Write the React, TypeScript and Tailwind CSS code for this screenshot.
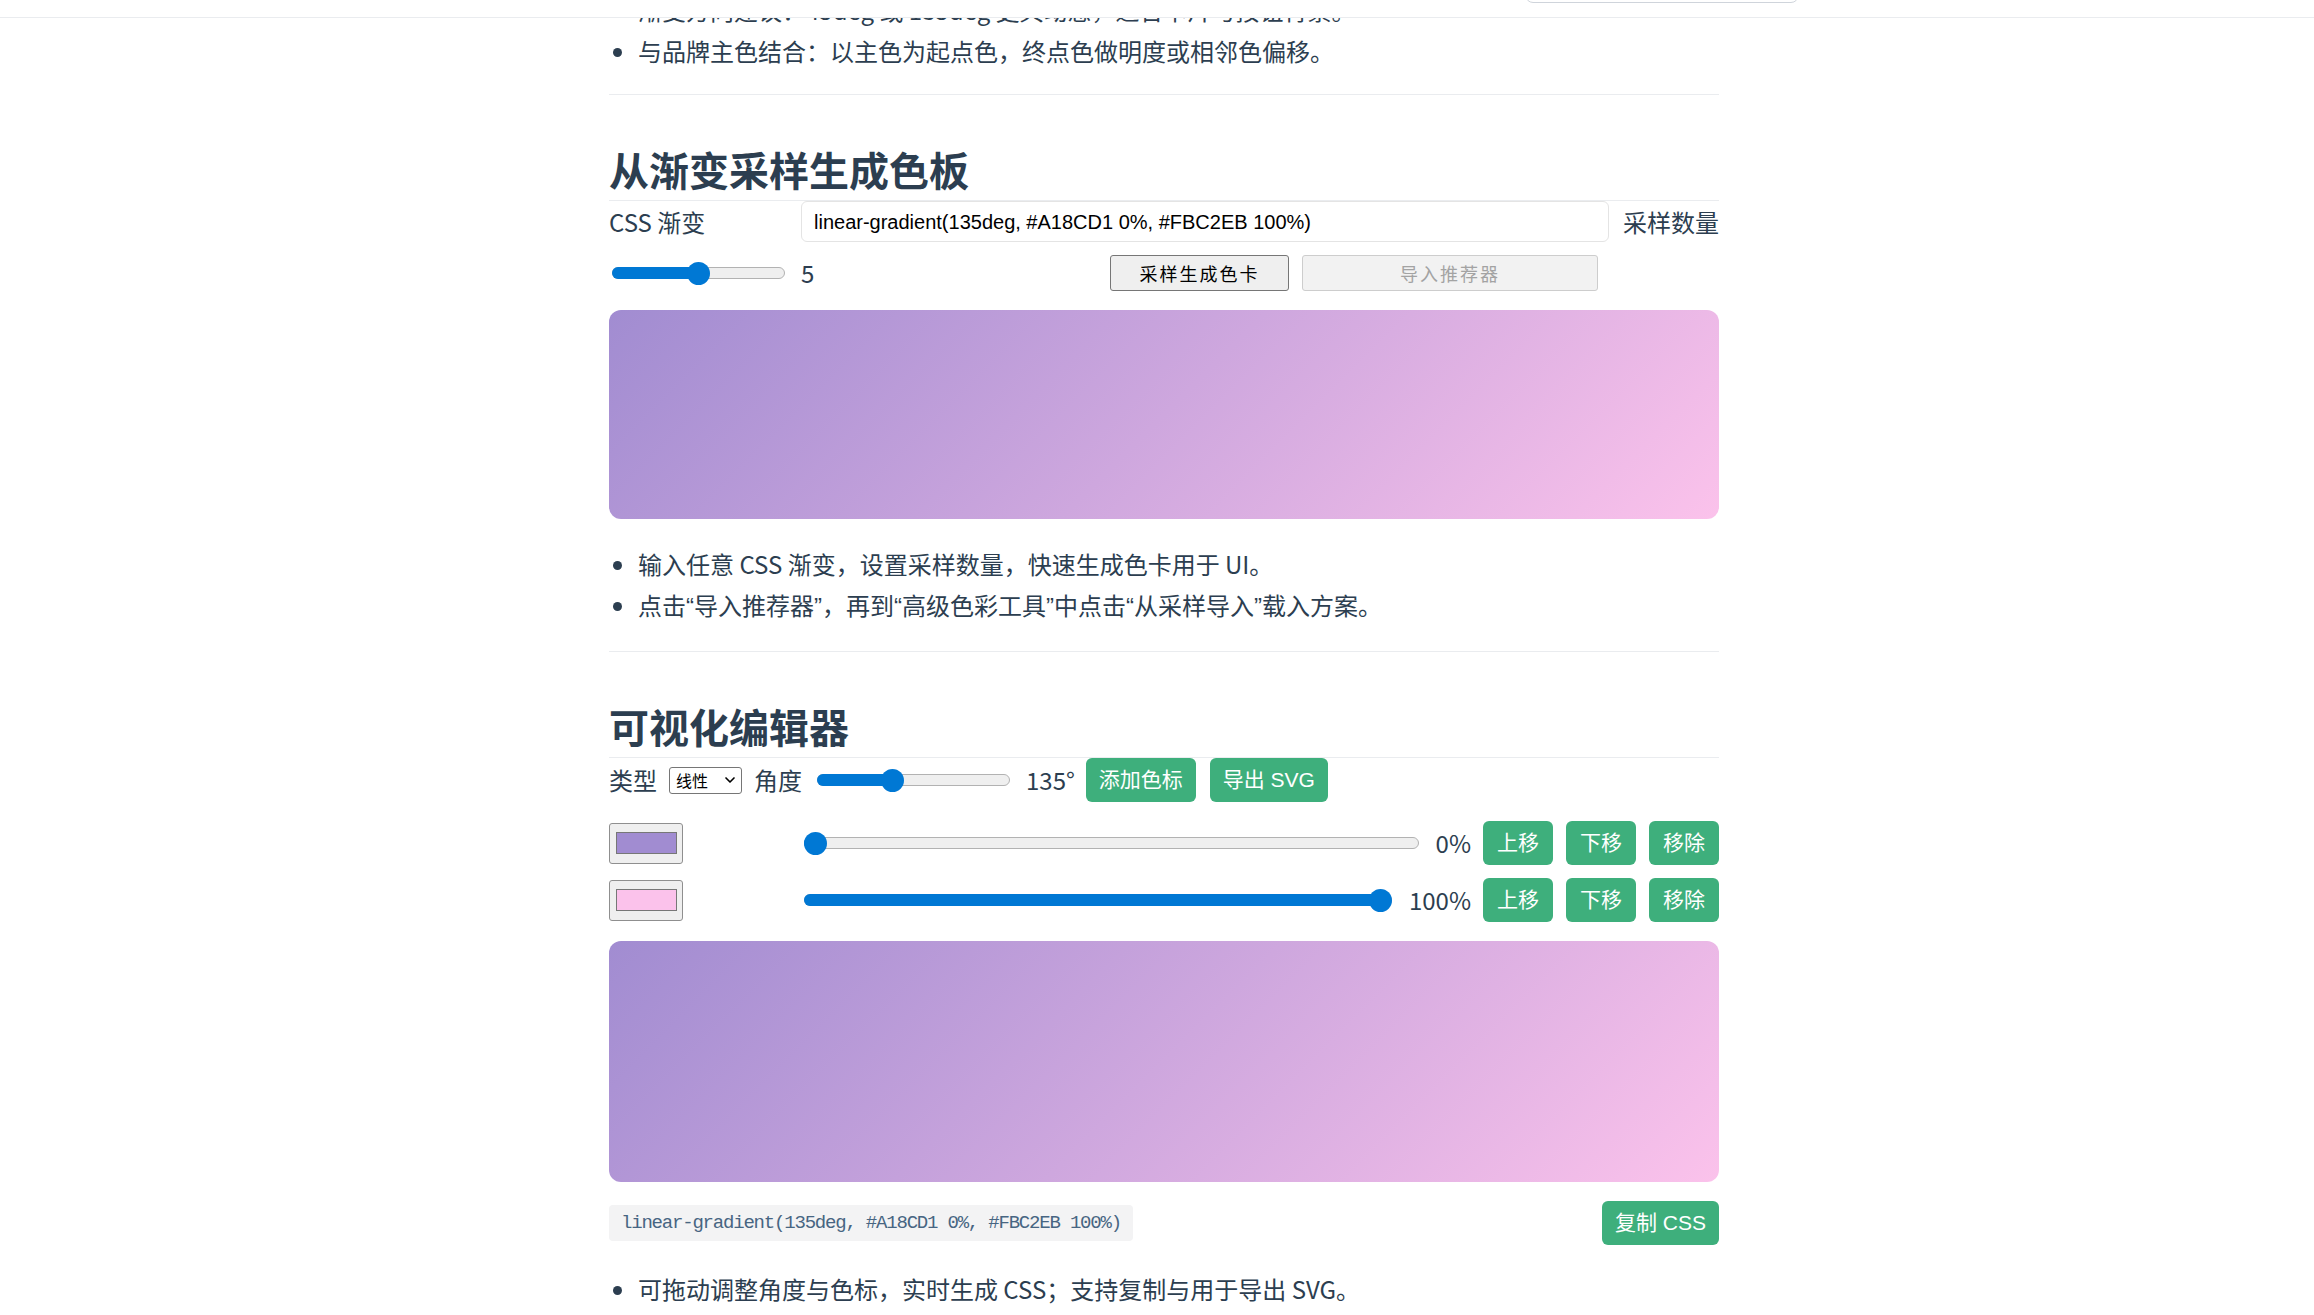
import React from 'react';
import { ChevronDown } from 'lucide-react';

const GRADIENT = 'linear-gradient(135deg, #A18CD1 0%, #FBC2EB 100%)';

// thumb centre = r + p * (w - 2r), like a native range input
const Range: React.FC<{ pct: number; width?: number }> = ({ pct, width }) => {
    const left = `calc(11.5px + ${pct} * (100% - 23px))`;
    return (
        <div
            className={width ? 'relative h-[23px] shrink-0' : 'relative h-[23px] flex-1'}
            style={width ? { width } : undefined}
        >
            <div className="absolute left-0 right-0 top-[5.5px] h-[12px] rounded-full bg-[#efefef] border border-[#b2b2b2]" />
            <div
                className="absolute left-0 top-[5.5px] h-[12px] rounded-full bg-[#0078d4]"
                style={{ width: left }}
            />
            <div
                className="absolute top-0 w-[23px] h-[23px] -ml-[11.5px] rounded-full bg-[#0078d4]"
                style={{ left }}
            />
        </div>
    );
};

const GreenButton: React.FC<{ children: React.ReactNode; className?: string }> = ({ children, className }) => (
    <button
        className={`h-[44px] rounded-[6px] bg-[#3eaf7c] text-white text-[21px] font-['Liberation_Sans','Noto_Sans_CJK_SC',sans-serif] ${className ?? ''}`}
    >
        {children}
    </button>
);

// narrow quote marks, as the page's CJK font draws them
const Q: React.FC<{ c: string }> = ({ c }) => <span className="font-['Liberation_Sans',sans-serif]">{c}</span>;

const StopRow: React.FC<{ color: string; pct: number; label: string; first?: boolean }> = ({ color, pct, label, first }) => (
    <div className={`flex items-center h-[44px] ${first ? 'mt-[19px]' : 'mt-[13px]'}`}>
        <div className="w-[195px] shrink-0">
            <div className="w-[74px] h-[41px] rounded-[3px] border border-[#8f8f8f] bg-[#efefef] flex items-center justify-center">
                <div className="w-[61px] h-[22px] border border-[#777]" style={{ backgroundColor: color }} />
            </div>
        </div>
        <Range pct={pct} />
        <span className="ml-[17px] text-[24px]">{label}</span>
        <GreenButton className="ml-[12px] w-[70px]">上移</GreenButton>
        <GreenButton className="ml-[13px] w-[70px]">下移</GreenButton>
        <GreenButton className="ml-[13px] w-[70px]">移除</GreenButton>
    </div>
);

const App: React.FC = () => {
    return (
        <div className="min-h-screen bg-white text-[#2c3e50] font-['Noto_Sans_CJK_SC','Noto_Sans',sans-serif] overflow-hidden">
            {/* fixed nav, mostly scrolled past */}
            <div className="fixed top-0 left-0 right-0 h-[18px] bg-white border-b border-[#eaecef] z-10">
                <div className="absolute right-[515px] top-[-31px] w-[274px] h-[34px] rounded-[8px] border border-[#cfd4db] bg-white" />
            </div>

            <div className="flex justify-center pl-[14px]">
                <div className="w-[1110px]">
                    <ul className="-mt-[11px] list-disc pl-[29px] text-[24px] leading-[41px]">
                        <li>渐变方向建议：45deg 或 135deg 更具动感，适合卡片与按钮背景。</li>
                        <li>与品牌主色结合：以主色为起点色，终点色做明度或相邻色偏移。</li>
                    </ul>
                    <hr className="mt-[23px] border-0 border-t border-[#eaecef]" />

                    <h2 className="mt-[49px] pb-[6px] text-[40px] leading-[50px] font-bold border-b border-[#eaecef]">
                        从渐变采样生成色板
                    </h2>
                    <div className="flex items-center h-[41px]">
                        <span className="w-[192px] shrink-0 text-[24px]">CSS 渐变</span>
                        <div className="flex-1 h-[41px] rounded-[6px] border border-[#e4e4e4] flex items-center px-[12px] text-[20px] text-black font-['Liberation_Sans',sans-serif]">
                            linear-gradient(135deg, #A18CD1 0%, #FBC2EB 100%)
                        </div>
                        <span className="ml-[14px] text-[24px]">采样数量</span>
                    </div>
                    <div className="flex items-center h-[38px] mt-[12px]">
                        <div className="w-[192px] shrink-0 pl-[3px]">
                            <Range pct={0.5} width={173} />
                        </div>
                        <span className="w-[309px] shrink-0 text-[24px]">5</span>
                        <button className="w-[179px] h-[36px] rounded-[3px] border border-[#767676] bg-[#efefef] text-[18px] tracking-[2px] text-black">
                            采样生成色卡
                        </button>
                        <button
                            disabled
                            className="ml-[13px] w-[296px] h-[36px] rounded-[3px] border border-[#cdcdcd] bg-[#f2f2f2] text-[18px] tracking-[2px] text-[#a3a3a3]"
                        >
                            导入推荐器
                        </button>
                    </div>
                    <div className="mt-[18px] h-[209px] rounded-[12px]" style={{ backgroundImage: GRADIENT }} />

                    <ul className="mt-[24px] list-disc pl-[29px] text-[24px] leading-[41px]">
                        <li>输入任意 CSS 渐变，设置采样数量，快速生成色卡用于 UI。</li>
                        <li>
                            点击<Q c="“" />导入推荐器<Q c="”" />，再到<Q c="“" />高级色彩工具<Q c="”" />中点击
                            <Q c="“" />从采样导入<Q c="”" />载入方案。
                        </li>
                    </ul>
                    <hr className="mt-[24px] border-0 border-t border-[#eaecef]" />

                    <h2 className="mt-[49px] pb-[6px] text-[40px] leading-[50px] font-bold border-b border-[#eaecef]">
                        可视化编辑器
                    </h2>
                    <div className="flex items-center h-[44px]">
                        <span className="text-[24px]">类型</span>
                        <div className="ml-[12px] w-[73px] h-[27px] rounded-[3px] border border-[#767676] flex items-center justify-between pl-[6px] pr-[3px] text-[16px] text-black">
                            <span>线性</span>
                            <ChevronDown size={16} strokeWidth={2.5} />
                        </div>
                        <span className="ml-[12px] text-[24px]">角度</span>
                        <div className="ml-[15px]">
                            <Range pct={0.375} width={193} />
                        </div>
                        <span className="ml-[16px] text-[24px]">135°</span>
                        <GreenButton className="ml-[11px] w-[110px]">添加色标</GreenButton>
                        <GreenButton className="ml-[14px] w-[118px]">导出 SVG</GreenButton>
                    </div>

                    <StopRow first color="#A18CD1" pct={0} label="0%" />
                    <StopRow color="#FBC2EB" pct={1} label="100%" />

                    <div className="mt-[19px] h-[241px] rounded-[12px]" style={{ backgroundImage: GRADIENT }} />

                    <div className="mt-[19px] flex items-center justify-between h-[44px]">
                        <code className="h-[36px] flex items-center px-[12px] rounded-[4px] bg-[#f3f3f4] text-[#476582] text-[19px] tracking-[-1.2px] font-['Liberation_Mono',monospace]">
                            linear-gradient(135deg, #A18CD1 0%, #FBC2EB 100%)
                        </code>
                        <GreenButton className="w-[117px]">复制 CSS</GreenButton>
                    </div>

                    <ul className="mt-[23px] list-disc pl-[29px] text-[24px] leading-[41px]">
                        <li>可拖动调整角度与色标，实时生成 CSS；支持复制与用于导出 SVG。</li>
                    </ul>
                </div>
            </div>
        </div>
    );
};

export default App;
